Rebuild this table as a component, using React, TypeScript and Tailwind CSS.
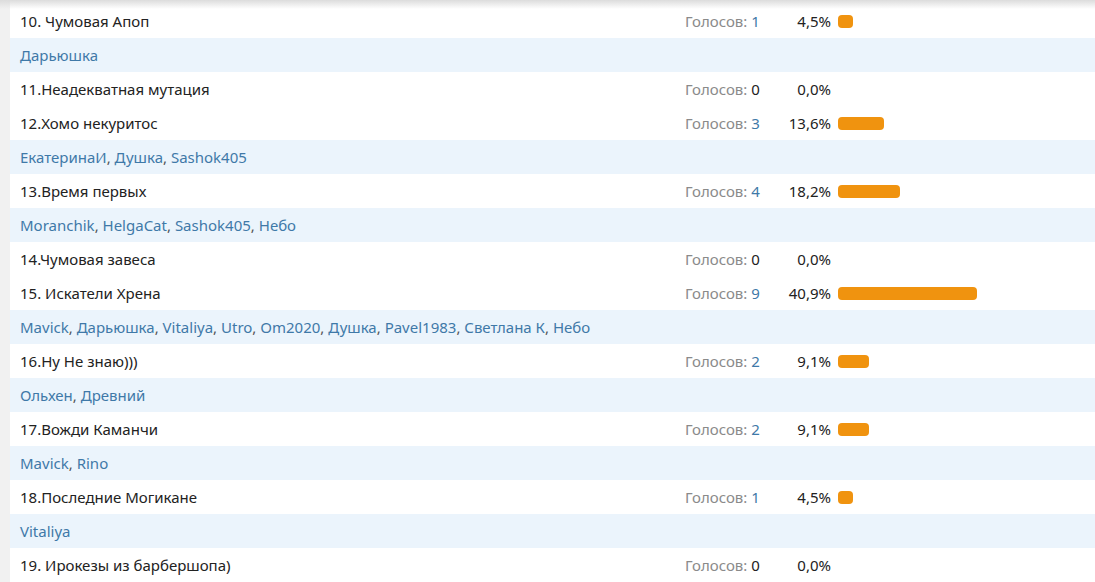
type Row =
  | { kind: 'option'; title: string; votes: number; pct: string; width: number }
  | { kind: 'voters'; names: string[] };

const rows: Row[] = [
  { kind: 'option', title: '10. Чумовая Апоп', votes: 1, pct: '4,5%', width: 15 },
  { kind: 'voters', names: ['Дарьюшка'] },
  { kind: 'option', title: '11.Неадекватная мутация', votes: 0, pct: '0,0%', width: 0 },
  { kind: 'option', title: '12.Хомо некуритос', votes: 3, pct: '13,6%', width: 46 },
  { kind: 'voters', names: ['ЕкатеринаИ', 'Душка', 'Sashok405'] },
  { kind: 'option', title: '13.Время первых', votes: 4, pct: '18,2%', width: 62 },
  { kind: 'voters', names: ['Moranchik', 'HelgaCat', 'Sashok405', 'Небо'] },
  { kind: 'option', title: '14.Чумовая завеса', votes: 0, pct: '0,0%', width: 0 },
  { kind: 'option', title: '15. Искатели Хрена', votes: 9, pct: '40,9%', width: 139 },
  {
    kind: 'voters',
    names: ['Mavick', 'Дарьюшка', 'Vitaliya', 'Utro', 'Om2020', 'Душка', 'Pavel1983', 'Светлана К', 'Небо'],
  },
  { kind: 'option', title: '16.Ну Не знаю)))', votes: 2, pct: '9,1%', width: 31 },
  { kind: 'voters', names: ['Ольхен', 'Древний'] },
  { kind: 'option', title: '17.Вожди Каманчи', votes: 2, pct: '9,1%', width: 31 },
  { kind: 'voters', names: ['Mavick', 'Rino'] },
  { kind: 'option', title: '18.Последние Могикане', votes: 1, pct: '4,5%', width: 15 },
  { kind: 'voters', names: ['Vitaliya'] },
  { kind: 'option', title: '19. Ирокезы из барбершопа)', votes: 0, pct: '0,0%', width: 0 },
];

function OptionRow({ row }: { row: Extract<Row, { kind: 'option' }> }) {
  return (
    <div className="flex h-[34px] items-center bg-white">
      <div className="w-[675px] shrink-0 pl-[10px] text-[#222]">{row.title}</div>
      <div className="w-[90px] shrink-0 whitespace-nowrap text-[#8a8a8a]">
        Голосов:{' '}
        <span className={row.votes > 0 ? 'text-[#3f79a8]' : 'text-[#222]'}>{row.votes}</span>
      </div>
      <div className="w-[56px] shrink-0 text-right text-[#222]">{row.pct}</div>
      <div className="ml-[7px] flex items-center">
        {row.width > 0 && (
          <div className="h-[13px] rounded-[4px] bg-[#f0930f]" style={{ width: row.width }} />
        )}
      </div>
    </div>
  );
}

function VotersRow({ names }: { names: string[] }) {
  return (
    <div className="flex h-[34px] items-center bg-[#ebf4fc] pl-[10px] text-[#3f79a8]">
      {names.map((name, i) => (
        <span key={name + i} className="whitespace-pre">
          <span>{name}</span>
          {i < names.length - 1 && <span className="text-[#555]">, </span>}
        </span>
      ))}
    </div>
  );
}

export default function App() {
  return (
    <div
      className="relative h-[582px] w-[1095px] overflow-hidden bg-[#f1f1f1] text-[15px]"
      style={{ fontFamily: '"Noto Sans", "Open Sans", sans-serif' }}
    >
      <div className="pointer-events-none absolute inset-x-0 top-0 z-10 h-[9px] bg-gradient-to-b from-[#dcdcdc] to-transparent" />
      <div className="ml-[10px] bg-white pt-[4px]">
        {rows.map((row, i) =>
          row.kind === 'option' ? (
            <OptionRow key={i} row={row} />
          ) : (
            <VotersRow key={i} names={row.names} />
          )
        )}
      </div>
    </div>
  );
}
